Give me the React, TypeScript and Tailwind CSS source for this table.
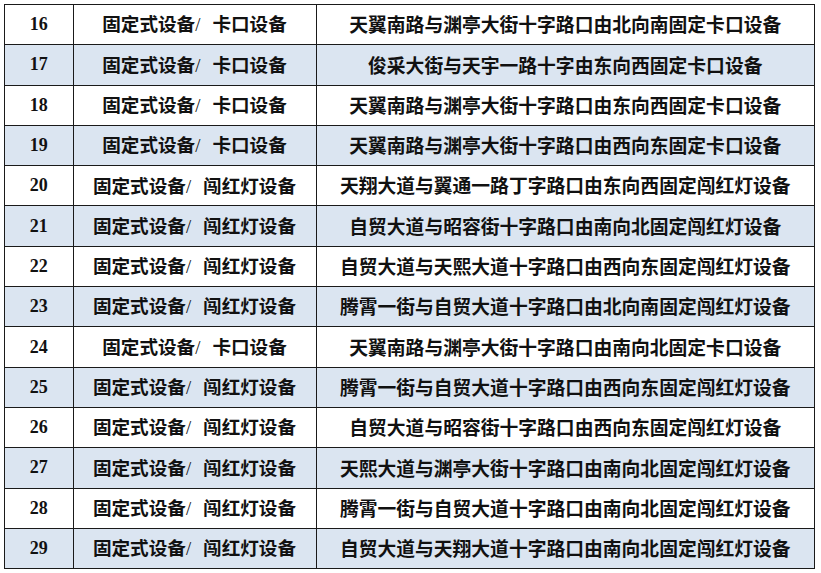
const rows: [string, string, string][] = [
  ['16', '卡口设备', '天翼南路与渊亭大街十字路口由北向南固定卡口设备'],
  ['17', '卡口设备', '俊采大街与天宇一路十字由东向西固定卡口设备'],
  ['18', '卡口设备', '天翼南路与渊亭大街十字路口由东向西固定卡口设备'],
  ['19', '卡口设备', '天翼南路与渊亭大街十字路口由西向东固定卡口设备'],
  ['20', '闯红灯设备', '天翔大道与翼通一路丁字路口由东向西固定闯红灯设备'],
  ['21', '闯红灯设备', '自贸大道与昭容街十字路口由南向北固定闯红灯设备'],
  ['22', '闯红灯设备', '自贸大道与天熙大道十字路口由西向东固定闯红灯设备'],
  ['23', '闯红灯设备', '腾霄一街与自贸大道十字路口由北向南固定闯红灯设备'],
  ['24', '卡口设备', '天翼南路与渊亭大街十字路口由南向北固定卡口设备'],
  ['25', '闯红灯设备', '腾霄一街与自贸大道十字路口由西向东固定闯红灯设备'],
  ['26', '闯红灯设备', '自贸大道与昭容街十字路口由西向东固定闯红灯设备'],
  ['27', '闯红灯设备', '天熙大道与渊亭大街十字路口由南向北固定闯红灯设备'],
  ['28', '闯红灯设备', '腾霄一街与自贸大道十字路口由南向北固定闯红灯设备'],
  ['29', '闯红灯设备', '自贸大道与天翔大道十字路口由南向北固定闯红灯设备'],
]

export default function App() {
  return (
    <div className="w-[821px] h-[573px] bg-white pt-[4px] pl-[4px]">
      <div className="w-[811px] border-l border-t border-[#1a1a1a] grid grid-cols-[68.5px_243px_1fr] text-[#111]">
        {rows.map(([no, kind, place], i) => {
          const bg = i % 2 === 1 ? 'bg-[#dbe5f1]' : 'bg-white'
          return (
            <div key={no} className="contents">
              <div className={`${bg} h-[40.3px] border-r border-b border-[#1a1a1a] flex items-center justify-center text-[18px] font-bold font-['Liberation_Serif',serif]`}>
                {no}
              </div>
              <div className={`${bg} h-[40.3px] border-r border-b border-[#1a1a1a] flex items-center justify-center text-[18.6px] leading-none font-bold font-['Noto_Sans_CJK_SC',sans-serif]`}>
                <span className="whitespace-nowrap">
                  固定式设备<span className="font-['Liberation_Serif',serif] font-normal">/</span>
                  <span className="inline-block w-[12px]" />
                  {kind}
                </span>
              </div>
              <div className={`${bg} h-[40.3px] border-r border-b border-[#1a1a1a] flex items-center justify-center text-[18.8px] leading-none font-bold font-['Noto_Sans_CJK_SC',sans-serif]`}>
                {place}
              </div>
            </div>
          )
        })}
      </div>
    </div>
  )
}
